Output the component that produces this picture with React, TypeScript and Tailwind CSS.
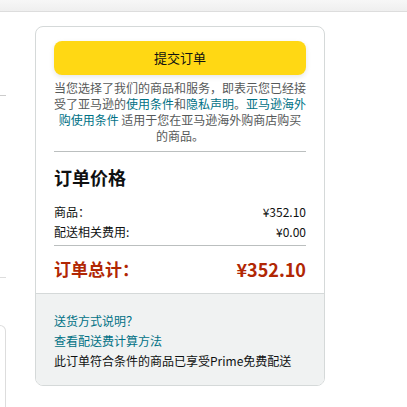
import React from "react";

const font = {
  fontFamily: '"Noto Sans CJK SC", "Liberation Sans", sans-serif',
};

const Link = ({ children }: { children: React.ReactNode }) => (
  <span className="text-[#007185]">{children}</span>
);

const SummaryRow = ({ label, value }: { label: string; value: string }) => (
  <div className="flex justify-between items-center h-[20px] text-[12px] text-[#0f1111]">
    <span>{label}</span>
    <span>{value}</span>
  </div>
);

const App = () => {
  return (
    <div
      lang="zh-CN"
      className="w-[407px] h-[407px] bg-white overflow-hidden"
      style={font}
    >
      <div className="h-[12px] bg-gradient-to-b from-[#f7f7f7] to-[#efefef] border-b border-[#dddddd]" />
      <div className="flex items-start">
        {/* cut-off column on the left */}
        <div className="w-[6px] shrink-0 overflow-hidden">
          <div className="h-[83px]" />
          <div className="h-px bg-[#cccccc]" />
          <div className="h-[181px]" />
          <div className="h-px bg-[#dddddd]" />
          <div className="h-[47px]" />
          <div className="h-[100px] border border-l-0 border-[#dddddd] rounded-tr-[8px]" />
        </div>

        <div className="ml-[29px] mt-[14px] w-[290px] shrink-0 border border-[#d5d9d9] rounded-[8px] overflow-hidden">
          <div className="px-[18px] pt-[14px] pb-[12px]">
            <button className="w-full h-[34px] rounded-[8px] bg-[#ffd814] text-[13px] text-[#0f1111] shadow-[0_2px_5px_0_rgba(213,217,217,0.6)]">
              提交订单
            </button>
            <p className="mt-[5px] -mx-px text-center text-[12px] leading-[16px] text-[#565959]">
              当您选择了我们的商品和服务，即表示您已经接受了亚马逊的<Link>使用条件</Link>和<Link>隐私声明</Link>。<Link>亚马逊海外购使用条件</Link> 适用于您在亚马逊海外购商店购买的商品。
            </p>
            <div className="mt-[7px] h-px bg-[#bbbfbf]" />
            <h2 className="mt-[13px] text-[18px] leading-[24px] font-bold text-[#0f1111]">
              订单价格
            </h2>
            <div className="mt-[13px]">
              <SummaryRow label="商品：" value="¥352.10" />
              <SummaryRow label="配送相关费用:" value="¥0.00" />
            </div>
            <div className="mt-[3px] h-px bg-[#bbbfbf]" />
            <div className="mt-[11px] flex justify-between items-center h-[24px] font-bold text-[#b12704]">
              <span className="text-[17px]">订单总计：</span>
              <span className="text-[18px]">¥352.10</span>
            </div>
          </div>
          <div className="border-t border-[#d5d9d9] bg-[#f0f2f2] px-[18px] pt-[17px] pb-[14px] text-[12px] leading-[20px]">
            <div>
              <Link>送货方式说明？</Link>
            </div>
            <div>
              <Link>查看配送费计算方法</Link>
            </div>
            <div className="text-[#0f1111]">此订单符合条件的商品已享受Prime免费配送</div>
          </div>
        </div>
      </div>
    </div>
  );
};

export default App;
